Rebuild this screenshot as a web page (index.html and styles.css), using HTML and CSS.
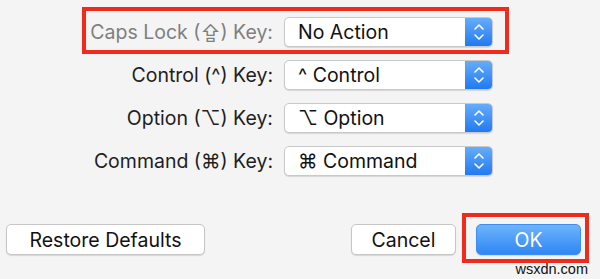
FILE: index.html
```html
<!DOCTYPE html>
<html lang="en">
<head>
    <meta charset="UTF-8">
    <meta name="viewport" content="width=device-width, initial-scale=1.0">
    <title>Modifier Keys</title>
    <link rel="stylesheet" href="styles.css">
</head>
<body>
    <div class="sheet">
        <div class="keys">
            <div class="key-row highlight">
                <label class="key-label disabled">Caps Lock (⇪) Key:</label>
                <div class="popup">
                    <span class="popup-value">No Action</span>
                    <span class="popup-arrows">
                        <svg width="28" height="30" viewBox="0 0 28 30"><path d="M10 12 L14 8 L18 12 M10 18 L14 22 L18 18" fill="none" stroke="#fff" stroke-width="1.6" stroke-linecap="round" stroke-linejoin="round"/></svg>
                    </span>
                </div>
            </div>
            <div class="key-row">
                <label class="key-label">Control (^) Key:</label>
                <div class="popup">
                    <span class="popup-value">^ Control</span>
                    <span class="popup-arrows">
                        <svg width="28" height="30" viewBox="0 0 28 30"><path d="M10 12 L14 8 L18 12 M10 18 L14 22 L18 18" fill="none" stroke="#fff" stroke-width="1.6" stroke-linecap="round" stroke-linejoin="round"/></svg>
                    </span>
                </div>
            </div>
            <div class="key-row">
                <label class="key-label">Option (⌥) Key:</label>
                <div class="popup">
                    <span class="popup-value">⌥ Option</span>
                    <span class="popup-arrows">
                        <svg width="28" height="30" viewBox="0 0 28 30"><path d="M10 12 L14 8 L18 12 M10 18 L14 22 L18 18" fill="none" stroke="#fff" stroke-width="1.6" stroke-linecap="round" stroke-linejoin="round"/></svg>
                    </span>
                </div>
            </div>
            <div class="key-row">
                <label class="key-label">Command (⌘) Key:</label>
                <div class="popup">
                    <span class="popup-value">⌘ Command</span>
                    <span class="popup-arrows">
                        <svg width="28" height="30" viewBox="0 0 28 30"><path d="M10 12 L14 8 L18 12 M10 18 L14 22 L18 18" fill="none" stroke="#fff" stroke-width="1.6" stroke-linecap="round" stroke-linejoin="round"/></svg>
                    </span>
                </div>
            </div>
        </div>

        <div class="buttons">
            <button class="btn btn-restore">Restore Defaults</button>
            <div class="buttons-right">
                <button class="btn">Cancel</button>
                <button class="btn btn-ok highlight">OK</button>
            </div>
        </div>

        <div class="watermark">wsxdn.com</div>
    </div>
</body>
</html>
```

FILE: styles.css
```css
body {
    margin: 0;
    background: #f4f4f4;
    font-family: Inter, "DejaVu Sans", sans-serif;
    color: #1c1c1c;
}
.sheet {
    width: 600px;
    height: 279px;
    overflow: hidden;
}
.keys {
    display: flex;
    flex-direction: column;
    gap: 13px;
    padding: 17px 0 0 86px;
}
.key-row {
    display: flex;
    align-items: center;
    width: 407px;
    position: relative;
}
.key-label {
    display: flex;
    justify-content: flex-end;
    flex-shrink: 0;
    width: 187px;
    white-space: nowrap;
    font-size: 19.5px;
    color: #1e1e1e;
    margin-right: 11px;
}
.key-label.disabled {
    color: #7f7f7f;
}
.popup {
    display: flex;
    align-items: center;
    width: 209px;
    height: 30px;
    box-sizing: border-box;
    background: white;
    border: 1px solid #c9c9c9;
    border-radius: 5px;
    box-shadow: 0 1px 1px rgba(0,0,0,0.12);
    overflow: hidden;
}
.popup-value {
    flex: 1;
    padding-left: 13px;
    font-size: 19.5px;
    color: #111;
}
.popup-arrows {
    display: flex;
    width: 28px;
    height: 30px;
    margin: -1px -1px -1px 0;
    background: linear-gradient(#68aefb, #1f78f0);
}
.highlight::after {
    content: "";
    position: absolute;
    border: 4px solid #f12b1c;
}
.key-row.highlight::after {
    top: -10px;
    bottom: -7px;
    left: -4px;
    right: -16px;
}
.buttons {
    display: flex;
    justify-content: space-between;
    padding: 48px 19px 0 6px;
}
.buttons-right {
    display: flex;
    gap: 20px;
}
.btn {
    height: 31px;
    padding: 0;
    font-family: Inter, "DejaVu Sans", sans-serif;
    font-size: 19.5px;
    color: #111;
    background: white;
    border: 1px solid #c6c6c6;
    border-radius: 5px;
    box-shadow: 0 1px 1px rgba(0,0,0,0.12);
}
.btn-restore {
    width: 199px;
}
.buttons-right .btn {
    width: 105px;
}
.btn-ok {
    position: relative;
    color: white;
    border-color: #3f8ef2;
    background: linear-gradient(#6db4fb, #2f86f5);
}
.btn-ok.highlight::after {
    top: -12px;
    bottom: -9px;
    left: -15px;
    right: -9px;
}
.watermark {
    text-align: right;
    padding: 7px 12px 0 0;
    font-family: "Liberation Sans", sans-serif;
    font-size: 14.5px;
    line-height: 14px;
    color: #111;
}
```
